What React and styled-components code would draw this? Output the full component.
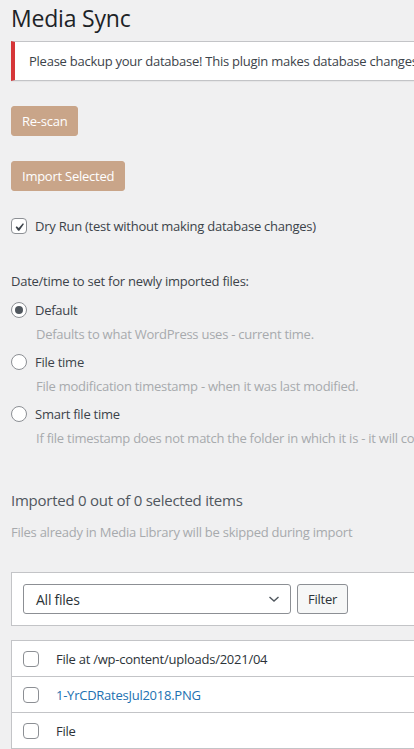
import React from 'react';
import styled, { createGlobalStyle } from 'styled-components';

const GlobalStyle = createGlobalStyle`
    body {
        margin: 0;
        background: #f0f0f1;
        color: #3c434a;
        font-family: "Open Sans", "Noto Sans", sans-serif;
        font-size: 13px;
        letter-spacing: -0.25px;
        overflow-x: hidden;
    }
`;

const Wrap = styled.div`
    width: 720px;
    padding: 0 0 0 11px;
`;

const Title = styled.h1`
    font-size: 23px;
    font-weight: 400;
    line-height: 30px;
    margin: 0;
    padding: 3px 0 0;
    color: #1d2327;
    letter-spacing: -0.2px;
`;

const Notice = styled.div`
    margin-top: 8px;
    background: #fff;
    border: 1px solid #c3c4c7;
    border-left: 4px solid #d63638;
    box-shadow: 0 1px 1px rgba(0, 0, 0, 0.04);
    padding: 9px 14px;
    line-height: 20px;
`;

const Button = styled.button`
    display: block;
    margin-top: 25px;
    height: 30px;
    padding: 0 10px;
    border: 1px solid #c9a589;
    border-radius: 3px;
    background: #c9a589;
    color: #fff;
    font-family: inherit;
    font-size: 13px;
    letter-spacing: inherit;
`;

const CheckRow = styled.label`
    display: flex;
    align-items: center;
    gap: 8px;
    margin-top: ${({ $top }) => $top || 0}px;
    height: 20px;
`;

const Box = styled.span`
    width: 16px;
    height: 16px;
    box-sizing: border-box;
    border: 1px solid #8c8f94;
    border-radius: 4px;
    background: #fff;
    display: flex;
    align-items: center;
    justify-content: center;
    flex-shrink: 0;
`;

const Radio = styled.span`
    width: 16px;
    height: 16px;
    box-sizing: border-box;
    border: 1px solid #8c8f94;
    border-radius: 50%;
    background: #fff;
    display: flex;
    align-items: center;
    justify-content: center;
    flex-shrink: 0;

    &::after {
        content: '';
        display: ${({ $checked }) => ($checked ? 'block' : 'none')};
        width: 8px;
        height: 8px;
        border-radius: 50%;
        background: #50575e;
    }
`;

const Label = styled.div`
    margin-top: 35px;
    line-height: 20px;
`;

const Options = styled.div`
    margin-top: 9px;
    display: flex;
    flex-direction: column;
    gap: 8px;
`;

const Option = styled.div`
    display: flex;
    flex-direction: column;
    gap: 4px;
`;

const Description = styled.div`
    padding-left: 25px;
    color: #a7aaad;
    line-height: 20px;
    white-space: nowrap;
`;

const Status = styled.div`
    margin-top: 41px;
    font-size: 15px;
    line-height: 22px;
    color: #50575e;
`;

const Hint = styled.div`
    margin-top: 11px;
    color: #a7aaad;
    line-height: 20px;
`;

const FilterBar = styled.div`
    margin-top: 30px;
    background: #fff;
    border: 1px solid #c3c4c7;
    padding: 11px 11px;
    display: flex;
    gap: 6px;
`;

const Select = styled.div`
    width: 268px;
    height: 30px;
    box-sizing: border-box;
    border: 1px solid #8c8f94;
    border-radius: 3px;
    display: flex;
    align-items: center;
    justify-content: space-between;
    padding: 0 10px 0 12px;
    color: #2c3338;
    font-size: 14px;
`;

const FilterButton = styled.button`
    height: 30px;
    padding: 0 10px;
    border: 1px solid #8c8f94;
    border-radius: 3px;
    background: #f6f7f7;
    color: #2c3338;
    font-family: inherit;
    font-size: 13px;
    letter-spacing: inherit;
`;

const Table = styled.div`
    margin-top: 14px;
    background: #fff;
    border: 1px solid #c3c4c7;
`;

const Row = styled.div`
    display: flex;
    align-items: center;
    gap: 17px;
    height: 35px;
    padding-left: 11px;
    border-top: ${({ $first }) => ($first ? 'none' : '1px solid #c3c4c7')};
    font-size: 13px;
    color: ${({ $link }) => ($link ? '#2271b1' : '#2c3338')};
`;

const Check = () => (
    <svg width="14" height="14" viewBox="0 0 20 20">
        <path d="M14.83 4.89l1.34.94-5.81 8.38H9.02L5.78 9.67l1.34-1.25 2.57 2.4z" fill="#3c434a" transform="translate(-1.5 0.5) scale(1.15)" />
    </svg>
);

const Chevron = () => (
    <svg width="12" height="12" viewBox="0 0 12 12">
        <path d="M1.5 4l4.5 4 4.5-4" fill="none" stroke="#50575e" strokeWidth="1.4" />
    </svg>
);

const options = [
    { name: 'Default', desc: 'Defaults to what WordPress uses - current time.', checked: true },
    { name: 'File time', desc: 'File modification timestamp - when it was last modified.' },
    { name: 'Smart file time', desc: 'If file timestamp does not match the folder in which it is - it will consider the folder date.' },
];

const App = () => (
    <>
        <GlobalStyle />
        <Wrap>
            <Title>Media Sync</Title>
            <Notice>Please backup your database! This plugin makes database changes.</Notice>
            <Button>Re-scan</Button>
            <Button>Import Selected</Button>
            <CheckRow $top={25}>
                <Box><Check /></Box>
                Dry Run (test without making database changes)
            </CheckRow>
            <Label>Date/time to set for newly imported files:</Label>
            <Options>
                {options.map((o) => (
                    <Option key={o.name}>
                        <CheckRow>
                            <Radio $checked={o.checked} />
                            {o.name}
                        </CheckRow>
                        <Description>{o.desc}</Description>
                    </Option>
                ))}
            </Options>
            <Status>Imported 0 out of 0 selected items</Status>
            <Hint>Files already in Media Library will be skipped during import</Hint>
            <FilterBar>
                <Select>All files <Chevron /></Select>
                <FilterButton>Filter</FilterButton>
            </FilterBar>
            <Table>
                <Row $first>
                    <Box />
                    File at /wp-content/uploads/2021/04
                </Row>
                <Row $link>
                    <Box />
                    1-YrCDRatesJul2018.PNG
                </Row>
                <Row>
                    <Box />
                    File
                </Row>
            </Table>
        </Wrap>
    </>
);

export default App;
